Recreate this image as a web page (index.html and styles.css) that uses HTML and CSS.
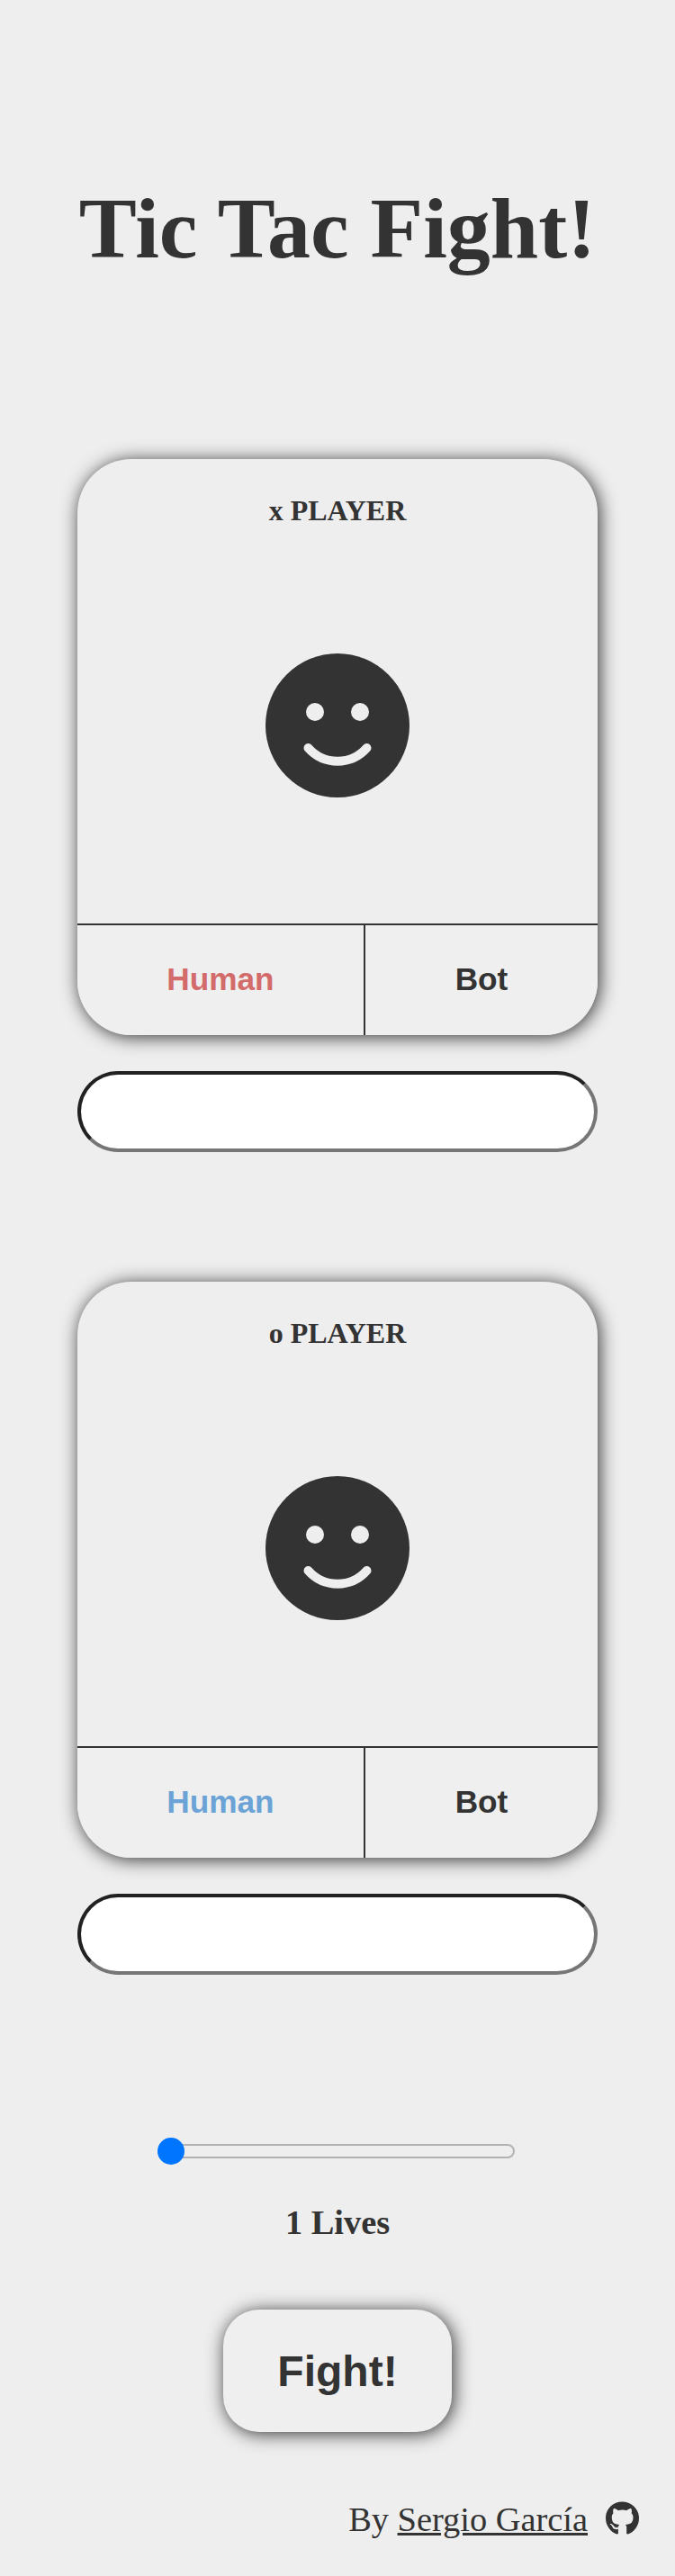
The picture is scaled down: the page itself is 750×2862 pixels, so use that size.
FILE: index.html
```html
<!DOCTYPE html>
<html lang="en">
<head>
<meta charset="utf-8">
<title>Tic Tac Fight!</title>
<link rel="stylesheet" href="styles.css">
</head>
<body>
<h1 class="title">Tic Tac Fight!</h1>
<main class="players">
  <section class="player">
    <div class="card">
      <h2 class="card-title">x PLAYER</h2>
      <div class="avatar">
        <svg class="face" viewBox="0 0 160 160"><circle class="face-skin" cx="80" cy="80" r="80"/><circle class="face-eye" cx="55" cy="65" r="10"/><circle class="face-eye" cx="105" cy="65" r="10"/><path class="face-mouth" d="M47.5 105a43.3 43.3 0 0 0 65 0"/></svg>
      </div>
      <div class="options">
        <button class="option option-human option-x">Human</button>
        <button class="option option-bot">Bot</button>
      </div>
    </div>
    <input class="name" type="text" aria-label="x player name">
  </section>
  <section class="player">
    <div class="card">
      <h2 class="card-title">o PLAYER</h2>
      <div class="avatar">
        <svg class="face" viewBox="0 0 160 160"><circle class="face-skin" cx="80" cy="80" r="80"/><circle class="face-eye" cx="55" cy="65" r="10"/><circle class="face-eye" cx="105" cy="65" r="10"/><path class="face-mouth" d="M47.5 105a43.3 43.3 0 0 0 65 0"/></svg>
      </div>
      <div class="options">
        <button class="option option-human option-o">Human</button>
        <button class="option option-bot">Bot</button>
      </div>
    </div>
    <input class="name" type="text" aria-label="o player name">
  </section>
</main>
<section class="lives">
  <div class="slider"><div class="thumb"></div></div>
  <p class="lives-label">1 Lives</p>
</section>
<button class="fight">Fight!</button>
<footer class="footer">
  <span>By <a class="author" href="#">Sergio García</a></span>
  <svg class="github" viewBox="0 0 496 484"><path d="M165.9 389.4c0 2-2.300 3.600-5.200 3.600-3.300.3-5.600-1.300-5.600-3.600 0-2 2.300-3.600 5.200-3.600 3-.3 5.600 1.300 5.600 3.600zm-31.100-4.500c-.7 2 1.300 4.300 4.300 4.900 2.600 1 5.600 0 6.200-2s-1.300-4.300-4.300-5.200c-2.600-.7-5.500.3-6.200 2.300zm44.200-1.700c-2.900.7-4.900 2.600-4.600 4.900.3 2 2.900 3.300 5.900 2.600 2.900-.7 4.900-2.600 4.600-4.600-.3-1.900-3-3.200-5.900-2.900zM244.800 0C106.100 0 0 105.300 0 244c0 110.900 69.800 205.800 169.500 239.200 12.800 2.300 17.300-5.600 17.300-12.100 0-6.200-.3-40.400-.3-61.400 0 0-70 15-84.700-29.800 0 0-11.400-29.100-27.800-36.600 0 0-22.900-15.700 1.600-15.400 0 0 24.900 2 38.600 25.800 21.900 38.600 58.600 27.500 72.900 20.900 2.300-16 8.800-27.100 16-33.700-55.900-6.200-112.300-14.300-112.300-110.500 0-27.500 7.600-41.300 23.600-58.900-2.600-6.500-11.100-33.300 2.600-67.900 20.900-6.500 69 27 69 27 20-5.600 41.500-8.500 62.800-8.500s42.800 2.900 62.800 8.500c0 0 48.100-33.600 69-27 13.700 34.700 5.200 61.400 2.600 67.900 16 17.700 25.800 31.500 25.800 58.900 0 96.500-58.900 104.200-114.800 110.500 9.200 7.900 17 22.900 17 46.400 0 33.700-.3 75.400-.3 83.600 0 6.500 4.600 14.400 17.300 12.100C428.200 449.800 496 354.900 496 244 496 105.300 383.500 0 244.800 0z"/></svg>
</footer>
</body>
</html>
```
FILE: styles.css
```css
*, *::after { box-sizing: border-box; }
body {
  margin: 0;
  min-height: 2862px;
  display: flex;
  flex-direction: column;
  align-items: center;
  background: #eee;
  color: #333;
  font-family: "Liberation Serif", "Times New Roman", serif;
}
.title { margin: 199px 0 0; height: 110px; font-size: 96px; line-height: 110px; }
.players { display: flex; flex-direction: column; gap: 144px; margin-top: 201px; }
.player { width: 578px; }
.card {
  display: flex;
  flex-direction: column;
  height: 640px;
  border-radius: 60px;
  overflow: hidden;
  box-shadow: 2px 2px 20px #333;
}
.card-title { margin: 39px 0 0; font-size: 32px; line-height: 37px; text-align: center; }
.avatar { flex: 1; display: flex; justify-content: center; padding-top: 140px; }
.face { width: 160px; height: 160px; }
.face-skin { fill: #333; }
.face-eye { fill: #eee; }
.face-mouth { fill: none; stroke: #eee; stroke-width: 10; stroke-linecap: round; }
.options { display: flex; height: 124px; border-top: 2px solid #333; }
.option {
  border: 0;
  padding: 0 0 2px;
  background: #efefef;
  color: #333;
  font: bold 35.2px "Liberation Sans", Arial, sans-serif;
}
.option-human { width: 320px; border-right: 2px solid #333; }
.option-bot { flex: 1; }
.option-x { color: #d36b6b; }
.option-o { color: #6ba3d6; }
.name {
  display: block;
  width: 578px;
  height: 90px;
  margin-top: 40px;
  padding: 0 40px;
  border: 4px inset #767676;
  border-radius: 45px;
  background: #fff;
  font-size: 36px;
}
.lives { display: flex; flex-direction: column; align-items: center; margin-top: 181px; }
.slider { display: flex; align-items: center; width: 397px; height: 30px; margin-left: -3px; }
.slider::after {
  content: "";
  width: 382px;
  height: 16px;
  margin-left: -15px;
  border: 2px solid #b2b2b2;
  border-radius: 8px;
}
.thumb {
  position: relative;
  z-index: 1;
  flex: none;
  width: 30px;
  height: 30px;
  border-radius: 50%;
  background: #0075ff;
}
.lives-label { margin: 42px 0 0; font-size: 38.4px; font-weight: bold; line-height: 44px; }
.fight {
  width: 254px;
  height: 136px;
  margin-top: 75px;
  border: 0;
  border-radius: 40px;
  background: #efefef;
  color: #333;
  box-shadow: 2px 2px 20px #333;
  font: bold 48px "Liberation Sans", Arial, sans-serif;
}
.footer {
  align-self: flex-end;
  display: flex;
  align-items: flex-start;
  gap: 20px;
  margin: 75px 40px 0 0;
  font-size: 38.4px;
  line-height: 44px;
}
.author { color: inherit; }
.github { width: 37px; height: 37px; margin-top: 2px; fill: #333; }
```
